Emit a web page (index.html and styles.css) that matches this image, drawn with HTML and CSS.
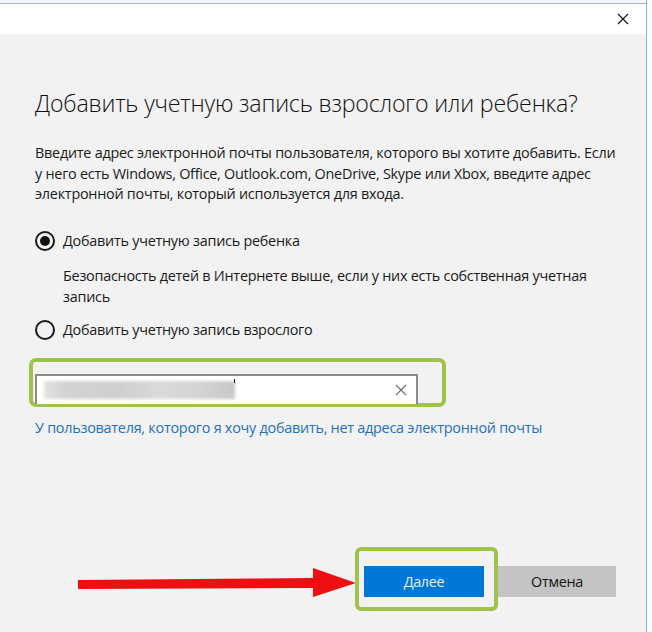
FILE: index.html
```html
<!DOCTYPE html>
<html lang="ru">
<head>
<meta charset="utf-8">
<link rel="stylesheet" href="styles.css">
</head>
<body>
<div class="win">
  <div class="topstrip"></div>
  <div class="titlebar">
    <span class="close">
      <svg width="12" height="12" viewBox="0 0 12 12"><path d="M1 1L11 11M11 1L1 11" stroke="#111" stroke-width="1.1" fill="none"/></svg>
    </span>
  </div>
  <div class="content">
    <h1 class="heading">Добавить учетную запись взрослого или ребенка?</h1>
    <p class="intro">Введите адрес электронной почты пользователя, которого вы хотите добавить. Если у него есть Windows, Office, Outlook.com, OneDrive, Skype или Xbox, введите адрес электронной почты, который используется для входа.</p>
    <div class="radio-row">
      <span class="radio checked"></span>
      <span class="label">Добавить учетную запись ребенка</span>
    </div>
    <p class="desc">Безопасность детей в Интернете выше, если у них есть собственная учетная запись</p>
    <div class="radio-row second">
      <span class="radio"></span>
      <span class="label">Добавить учетную запись взрослого</span>
    </div>
    <div class="hl-box">
      <div class="input">
        <span class="blur"></span>
        <span class="caret"></span>
        <svg class="clear" width="12" height="12" viewBox="0 0 12 12"><path d="M1 1L11 11M11 1L1 11" stroke="#6d6d6d" stroke-width="1.1" fill="none"/></svg>
      </div>
    </div>
    <a class="link" href="#">У пользователя, которого я хочу добавить, нет адреса электронной почты</a>
  </div>
  <div class="footer">
    <svg class="arrow" width="278" height="32" viewBox="0 0 278 32">
      <polygon points="0,14 236,12 236,22 0,23" fill="#ee1010"/>
      <polygon points="235,2 278,17 235,31" fill="#ee1010"/>
    </svg>
    <div class="hl-btn">
      <button class="btn primary">Далее</button>
    </div>
    <button class="btn secondary">Отмена</button>
  </div>
</div>
</body>
</html>
```

FILE: styles.css
```css
html, body {
  margin: 0;
  padding: 0;
}
body {
  background: #fbfcfd;
  font-family: "Open Sans", "Liberation Sans", sans-serif;
  color: #1a1a1a;
}
.win {
  width: 646px;
  height: 632px;
  background: #f2f2f2;
  border-right: 1px solid #8fb0cc;
  display: flex;
  flex-direction: column;
}
.topstrip {
  height: 3px;
  background: #f3f6f8;
  border-bottom: 1px solid #a4b3bf;
}
.titlebar {
  height: 30px;
  background: #ffffff;
  display: flex;
  justify-content: flex-end;
  align-items: center;
  padding-right: 17px;
}
.close {
  display: flex;
  width: 12px;
  height: 12px;
  margin-top: 0;
}
.content {
  padding-left: 35px;
  display: flex;
  flex-direction: column;
  align-items: flex-start;
}
.heading {
  margin: 53px 0 0;
  font-size: 23.2px;
  font-weight: 300;
  line-height: 32px;
  color: #111;
  letter-spacing: -0.2px;
}
.intro {
  margin: 24px 0 0;
  width: 582px;
  font-size: 14.4px;
  line-height: 20.5px;
  letter-spacing: -0.25px;
}
.radio-row {
  display: flex;
  align-items: center;
  gap: 8px;
  height: 20px;
  margin-top: 26px;
}
.radio-row.second {
  margin-top: 13px;
}
.radio {
  width: 20px;
  height: 20px;
  box-sizing: border-box;
  border: 2px solid #1a1a1a;
  border-radius: 50%;
  display: flex;
  align-items: center;
  justify-content: center;
}
.radio.checked::after {
  content: "";
  width: 10px;
  height: 10px;
  border-radius: 50%;
  background: #111;
}
.label {
  font-size: 14.4px;
  letter-spacing: -0.25px;
}
.desc {
  margin: 14px 0 0 28px;
  width: 540px;
  font-size: 14.4px;
  line-height: 21px;
  letter-spacing: -0.25px;
}
.hl-box {
  margin: 18px 0 0 -6px;
  width: 383px;
  border: 4px solid #9ec24a;
  border-radius: 7px;
  padding: 12px 24px 0 2px;
}
.input {
  position: relative;
  height: 30px;
  width: 383px;
  box-sizing: border-box;
  background: #fff;
  border: 2px solid #8c8c8c;
  border-bottom: none;
  margin-bottom: -1px;
  display: flex;
  align-items: center;
  padding-left: 7px;
}
.blur {
  width: 191px;
  height: 18px;
  background: linear-gradient(90deg, #e2e2e2 0%, #d2d2d2 12%, #cfcfcf 40%, #dadada 60%, #d4d4d4 80%, #c8c8c8 100%);
  filter: blur(1.5px);
}
.caret {
  position: absolute;
  left: 197px;
  top: 3px;
  width: 1px;
  height: 4px;
  background: #111;
}
.clear {
  position: absolute;
  right: 9px;
  top: 8px;
}
.link {
  margin-top: 11px;
  font-size: 14.4px;
  line-height: 20px;
  color: #1f70bf;
  text-decoration: none;
  letter-spacing: -0.25px;
}
.footer {
  margin-top: auto;
  margin-bottom: 21px;
  display: flex;
  align-items: flex-start;
  padding-left: 78px;
}
.arrow {
  margin-top: 19px;
  display: block;
}
.hl-btn {
  margin-left: -1px;
  border: 4px solid #9ec24a;
  border-radius: 6px;
  padding: 15px 10px 10px 5px;
  display: flex;
}
.btn {
  height: 31px;
  border: none;
  font-family: "Open Sans", "Liberation Sans", sans-serif;
  font-size: 14.4px;
  letter-spacing: -0.3px;
  padding: 0;
}
.primary {
  width: 120px;
  background: #0078d7;
  color: #e6f3ff;
}
.secondary {
  width: 118px;
  margin-top: 19px;
  background: #c4c4c4;
  color: #111;
}
```
